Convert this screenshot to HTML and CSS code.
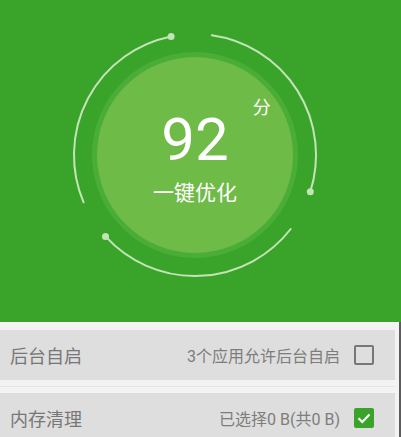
FILE: index.html
```html
<!DOCTYPE html>
<html lang="zh">
<head>
<meta charset="utf-8">
<link rel="stylesheet" href="styles.css">
</head>
<body>
<div class="page">
  <header class="hero">
    <div class="dial">
      <svg class="arcs" width="250" height="250" viewBox="0 0 250 250">
        <g fill="none" stroke="#c3e4b6" stroke-width="2" stroke-linecap="round">
          <path d="M101.1 6.4 A121 121 0 0 0 13.6 172.3"/>
          <path d="M141.8 5.2 A121 121 0 0 1 240.3 161.8"/>
          <path d="M35.5 206.4 A121 121 0 0 0 220.7 199"/>
        </g>
        <g fill="#c3e4b6">
          <circle cx="101.1" cy="6.4" r="3.5"/>
          <circle cx="240.3" cy="161.8" r="3.5"/>
          <circle cx="35.5" cy="206.4" r="3.5"/>
        </g>
      </svg>
      <div class="ring">
        <div class="core">
          <div class="score"><span class="num">92</span><span class="unit">分</span></div>
          <div class="action">一键优化</div>
        </div>
      </div>
    </div>
  </header>
  <section class="list">
    <div class="row">
      <span class="label">后台自启</span>
      <span class="info">3个应用允许后台自启</span>
      <span class="check"></span>
    </div>
    <div class="divider"></div>
    <div class="row">
      <span class="label">内存清理</span>
      <span class="info">已选择0 B(共0 B)</span>
      <span class="check on"><svg width="20" height="20" viewBox="0 0 20 20"><path d="M4.5 10.2 L8.3 14 L15.5 6.6" fill="none" stroke="#fff" stroke-width="2.2"/></svg></span>
    </div>
  </section>
</div>
</body>
</html>
```

FILE: styles.css
```css
* { box-sizing: border-box; }
html, body {
  margin: 0;
  padding: 0;
  width: 401px;
  height: 437px;
  overflow: hidden;
  background: #f3f3f3;
  font-family: "Roboto", "Noto Sans CJK SC", sans-serif;
}
.page {
  display: flex;
  flex-direction: column;
  width: 401px;
  height: 437px;
}
.hero {
  height: 322px;
  flex: none;
  background: #3aa42a;
  padding: 30px 0 0 70px;
}
.dial {
  display: grid;
  width: 250px;
  height: 250px;
  place-items: center;
}
.arcs, .ring {
  grid-area: 1 / 1;
}
.arcs { display: block; }
.ring {
  width: 206px;
  height: 206px;
  border-radius: 50%;
  background: #4aad37;
  display: flex;
  align-items: center;
  justify-content: center;
}
.core {
  width: 196px;
  height: 196px;
  border-radius: 50%;
  background: #6ebb47;
  display: flex;
  flex-direction: column;
  align-items: center;
  justify-content: center;
  color: #fff;
  padding-top: 1px;
}
.score {
  position: relative;
  line-height: 1;
}
.num {
  font-family: "Roboto", sans-serif;
  font-size: 60px;
  line-height: 1;
  display: block;
}
.unit {
  position: absolute;
  left: calc(100% + 24px);
  top: -13px;
  font-family: "Noto Sans CJK SC", sans-serif;
  font-size: 18px;
  line-height: 1;
}
.action {
  margin-top: 11px;
  font-family: "Noto Sans CJK SC", sans-serif;
  font-size: 21px;
  line-height: 1;
}
.list {
  flex: 1;
  background: #f3f3f3;
  padding: 8px 4px 0 0;
  border-right: 2px solid #5c5c5c;
}
.row {
  height: 50px;
  background: #dedede;
  display: flex;
  align-items: center;
  padding: 0 21px 0 10px;
}
.label {
  font-family: "Noto Sans CJK SC", sans-serif;
  font-size: 18px;
  color: #777;
  flex: 1;
}
.info {
  font-family: "Roboto", "Noto Sans CJK SC", sans-serif;
  font-size: 16px;
  color: #7d7d7d;
  margin-right: 14px;
}
.check {
  width: 20px;
  height: 20px;
  border: 2px solid #777;
  border-radius: 2px;
  display: flex;
}
.check.on {
  border: none;
  background: #3aa42a;
}
.divider {
  height: 1px;
  background: #e4e4e4;
  margin: 6px 0;
}
```
